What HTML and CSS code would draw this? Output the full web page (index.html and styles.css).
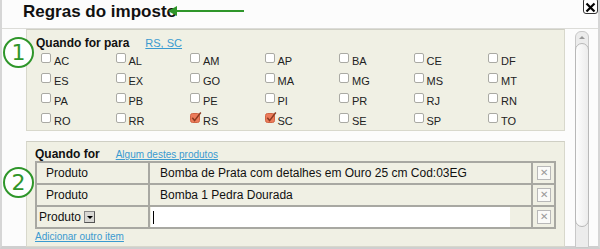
FILE: index.html
```html
<!DOCTYPE html>
<html>
<head>
    <title>Regras do imposto</title>
    <link rel="stylesheet" href="styles.css">
</head>
<body>
    <div class="dialog">
        <div class="dialog-header">
            <h1 class="dialog-title">Regras do imposto</h1>
            <button class="close-button">
                <svg width="11" height="11" viewBox="0 0 11 11">
                    <path d="M1.5 1.5 L9.5 9.5 M9.5 1.5 L1.5 9.5" stroke="#000" stroke-width="2.2"/>
                </svg>
            </button>
            <!-- annotation arrow -->
            <svg class="note-arrow" width="80" height="12" viewBox="0 0 80 12">
                <line x1="6" y1="6" x2="76" y2="6" stroke="#2f962a" stroke-width="2"/>
                <polygon points="0,6 9,1 9,11" fill="#2f962a"/>
            </svg>
        </div>

        <div class="dialog-body">
            <div class="sections">
                <!-- Section 1: states -->
                <div class="rule-section states-section">
                    <div class="note-circle">1</div>
                    <div class="rule-title">
                        <span class="rule-label">Quando for para</span>
                        <a href="#" class="rule-link">RS, SC</a>
                    </div>
                    <div class="state-grid">
                        <label class="state"><span class="box"></span>AC</label>
                        <label class="state"><span class="box"></span>AL</label>
                        <label class="state"><span class="box"></span>AM</label>
                        <label class="state"><span class="box"></span>AP</label>
                        <label class="state"><span class="box"></span>BA</label>
                        <label class="state"><span class="box"></span>CE</label>
                        <label class="state"><span class="box"></span>DF</label>

                        <label class="state"><span class="box"></span>ES</label>
                        <label class="state"><span class="box"></span>EX</label>
                        <label class="state"><span class="box"></span>GO</label>
                        <label class="state"><span class="box"></span>MA</label>
                        <label class="state"><span class="box"></span>MG</label>
                        <label class="state"><span class="box"></span>MS</label>
                        <label class="state"><span class="box"></span>MT</label>

                        <label class="state"><span class="box"></span>PA</label>
                        <label class="state"><span class="box"></span>PB</label>
                        <label class="state"><span class="box"></span>PE</label>
                        <label class="state"><span class="box"></span>PI</label>
                        <label class="state"><span class="box"></span>PR</label>
                        <label class="state"><span class="box"></span>RJ</label>
                        <label class="state"><span class="box"></span>RN</label>

                        <label class="state"><span class="box"></span>RO</label>
                        <label class="state"><span class="box"></span>RR</label>
                        <label class="state">
                            <svg class="box-checked" width="12" height="12" viewBox="0 0 12 12">
                                <rect x="0.5" y="1.5" width="9" height="9" rx="2" fill="#ec7b5a" stroke="#cf6444"/>
                                <path d="M2.3 5.8 L4.6 8.6 L10.8 0.5" fill="none" stroke="#8a3a20" stroke-width="1.5"/>
                            </svg>RS
                        </label>
                        <label class="state">
                            <svg class="box-checked" width="12" height="12" viewBox="0 0 12 12">
                                <rect x="0.5" y="1.5" width="9" height="9" rx="2" fill="#ec7b5a" stroke="#cf6444"/>
                                <path d="M2.3 5.8 L4.6 8.6 L10.8 0.5" fill="none" stroke="#8a3a20" stroke-width="1.5"/>
                            </svg>SC
                        </label>
                        <label class="state"><span class="box"></span>SE</label>
                        <label class="state"><span class="box"></span>SP</label>
                        <label class="state"><span class="box"></span>TO</label>
                    </div>
                </div>

                <!-- Section 2: products -->
                <div class="rule-section products-section">
                    <div class="note-circle">2</div>
                    <div class="rule-title">
                        <span class="rule-label">Quando for</span>
                        <a href="#" class="rule-link small">Algum destes produtos</a>
                    </div>
                    <table class="item-table">
                        <tr>
                            <td class="type-cell">Produto</td>
                            <td class="value-cell">Bomba de Prata com detalhes em Ouro 25 cm Cod:03EG</td>
                            <td class="remove-cell"><span class="remove">&#x2715;</span></td>
                        </tr>
                        <tr>
                            <td class="type-cell">Produto</td>
                            <td class="value-cell">Bomba 1 Pedra Dourada</td>
                            <td class="remove-cell"><span class="remove">&#x2715;</span></td>
                        </tr>
                        <tr>
                            <td class="type-cell select-cell">
                                <span class="type-select">Produto<span class="select-arrow"></span></span>
                            </td>
                            <td class="value-cell input-cell"><div class="item-input"><span class="caret"></span></div></td>
                            <td class="remove-cell"><span class="remove">&#x2715;</span></td>
                        </tr>
                    </table>
                    <a href="#" class="add-link">Adicionar outro item</a>
                </div>
            </div>

            <div class="scrollbar">
                <div class="scroll-up"></div>
                <div class="scroll-thumb"></div>
            </div>
        </div>
    </div>
</body>
</html>
```

FILE: styles.css
```css
body {
    margin: 0;
    font-family: "Liberation Sans", Arial, sans-serif;
    color: #111;
    background-color: #fff;
}

.dialog {
    height: 246px;
    border-left: 2px solid #d6d6d6;
    border-right: 2px solid #d6d6d6;
    border-bottom: 3px solid #cfcfcf;
    background-color: #fcfcfc;
}

.dialog-header {
    position: relative;
    height: 28px;
    border-bottom: 1px solid #dcdcd8;
}

.dialog-title {
    margin: 0;
    padding: 1px 0 0 21px;
    font-size: 17px;
    line-height: 21px;
    font-weight: bold;
}

.close-button {
    position: absolute;
    top: -2px;
    right: 0;
    width: 15px;
    height: 16px;
    padding: 2px 0 0;
    border: 1px solid #333;
    border-radius: 3px;
    background-color: #fff;
    line-height: 0;
}

.note-arrow {
    position: absolute;
    left: 166px;
    top: 5px;
}

.dialog-body {
    display: flex;
    height: 217px;
}

.sections {
    width: 539px;
    margin-left: 24px;
}

.rule-section {
    position: relative;
    background-color: #f0f0e4;
    border: 1px solid #d8d8cc;
    border-top-color: #cfcfc4;
}

.states-section {
    height: 100px;
    padding: 0 0 0 9px;
}

.products-section {
    height: 104px;
    margin-top: 10px;
    padding: 0 0 0 8px;
}

.note-circle {
    position: absolute;
    left: -24px;
    width: 27px;
    height: 27px;
    border: 2px solid #2f962a;
    border-radius: 50%;
    background-color: #fff;
    color: #2f962a;
    font-family: "DejaVu Sans", sans-serif;
    font-size: 22px;
    line-height: 27px;
    text-align: center;
}

.states-section .note-circle {
    top: 7px;
}

.products-section .note-circle {
    top: 25px;
}

.rule-title {
    display: flex;
    align-items: baseline;
    gap: 16px;
    padding-top: 7px;
    height: 13px;
}

.products-section .rule-title {
    padding-top: 6px;
}

.rule-label {
    font-size: 12px;
    font-weight: bold;
    line-height: 13px;
}

.rule-link {
    font-size: 11px;
    color: #3a9ad0;
}

.rule-link.small {
    font-size: 10px;
}

.state-grid {
    display: grid;
    grid-template-columns: repeat(7, 74.5px);
    grid-auto-rows: 20px;
    padding: 5px 0 0 5px;
}

.state {
    display: flex;
    align-items: flex-start;
    gap: 3px;
    font-size: 11px;
    line-height: 13px;
    color: #222;
}

.box {
    display: inline-block;
    width: 8px;
    height: 8px;
    margin-top: -2px;
    border: 1px solid #aaaaa4;
    border-radius: 2px;
    background-color: #fff;
}

.box-checked {
    margin-top: -3px;
    margin-right: -2px;
}

.item-table {
    width: 521px;
    margin-top: 0;
    border-collapse: collapse;
    border: 2px solid #a8a8a2;
    font-size: 12px;
}

.item-table td {
    height: 20px;
    border: 2px solid #a8a8a2;
    padding: 0;
}

.type-cell {
    width: 102px;
    padding-left: 9px !important;
}

.value-cell {
    padding-left: 10px !important;
}

.remove-cell {
    width: 21px;
    text-align: center;
}

.remove {
    display: inline-block;
    width: 12px;
    height: 12px;
    border: 1px solid #b8b8b8;
    background-color: #fafaf8;
    color: #999;
    font-size: 10px;
    line-height: 12px;
    vertical-align: middle;
}

.select-cell {
    padding-left: 2px !important;
}

.type-select {
    display: inline-flex;
    align-items: center;
    gap: 3px;
    font-size: 12px;
}

.select-arrow {
    position: relative;
    display: inline-block;
    width: 11px;
    height: 12px;
    background-color: #d8d8d4;
    border: 1px solid #888;
    border-right-color: #555;
    border-bottom-color: #555;
    box-sizing: border-box;
}

.select-arrow::after {
    content: "";
    position: absolute;
    left: 2px;
    top: 4px;
    border-left: 3px solid transparent;
    border-right: 3px solid transparent;
    border-top: 3px solid #000;
}

.input-cell {
    padding-left: 1px !important;
}

.item-input {
    width: 357px;
    height: 20px;
    background-color: #fff;
    display: flex;
    align-items: center;
    padding-left: 2px;
}

.caret {
    width: 1px;
    height: 13px;
    background-color: #000;
}

.add-link {
    display: block;
    margin-top: 2px;
    font-size: 10px;
    color: #3a9ad0;
}

.scrollbar {
    width: 12px;
    height: 215px;
    margin: 2px 0 0 10px;
    border: 1px solid #c8c8c8;
    border-radius: 6px 6px 0 0;
    background-color: #ececec;
    display: flex;
    flex-direction: column;
}

.scroll-up {
    position: relative;
    height: 11px;
}

.scroll-up::after {
    content: "";
    position: absolute;
    left: 3px;
    top: 4px;
    border-left: 3px solid transparent;
    border-right: 3px solid transparent;
    border-bottom: 3px solid #999;
}

.scroll-thumb {
    height: 182px;
    margin: 0 -1px;
    border: 1px solid #b8b8b8;
    border-radius: 7px;
    background: linear-gradient(to right, #fdfdfd, #ececec);
}
```
